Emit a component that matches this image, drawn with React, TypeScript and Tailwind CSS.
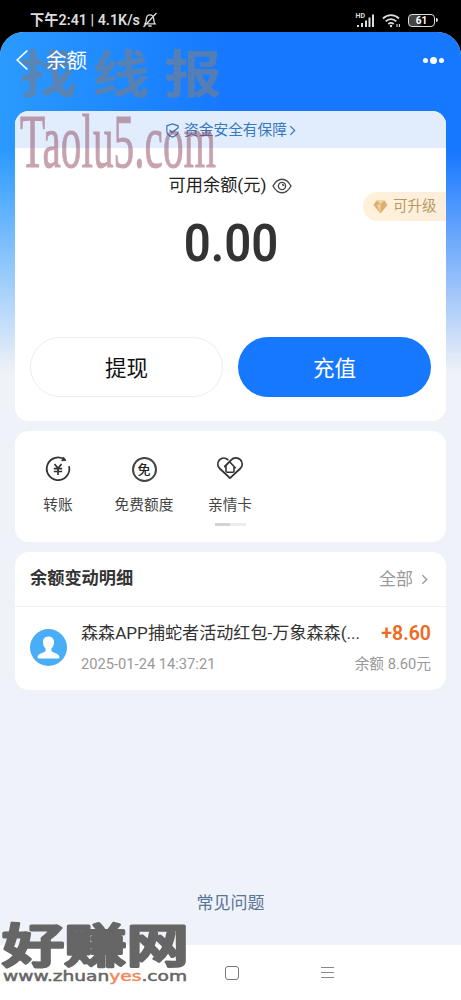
import type { ReactNode } from "react";

const ACTIONS = [
  { label: "转账", icon: <TransferIcon /> },
  { label: "免费额度", icon: <FreeQuotaIcon /> },
  { label: "亲情卡", icon: <FamilyCardIcon /> },
];

const RECORDS = [
  { title: "森森APP捕蛇者活动红包-万象森森(...", time: "2025-01-24 14:37:21", amount: "+8.60", balance: "余额 8.60元" },
];

function TransferIcon() {
  return (
    <svg viewBox="0 0 28 28" className="h-7 w-7" fill="none" stroke="#333" strokeWidth="1.8">
      <path d="M21 4.9A11.3 11.3 0 1 0 25.2 12" strokeLinecap="round" />
      <path d="M19.5 2l2.3 3.4-4.3.5z" fill="#333" strokeWidth=".6" />
      <path d="M10.5 9l3.5 4.3L17.5 9M9.8 13.6h8.4M9.8 16.5h8.4M14 13.3v6.6" strokeWidth="1.7" />
    </svg>
  );
}

function FreeQuotaIcon() {
  return (
    <span className="my-[1.5px] flex h-[25px] w-[25px] items-center justify-center rounded-full border-2 border-[#444] text-[13px] leading-none font-medium text-[#222]">
      免
    </span>
  );
}

function FamilyCardIcon() {
  return (
    <svg viewBox="0 0 28 28" className="h-7 w-7" fill="none" stroke="#333" strokeWidth="1.8" strokeLinecap="round" strokeLinejoin="round">
      <path d="M11.8 4.7C9.5 2.5 6 2.5 3.7 4.7c-2.6 2.7-2.4 6.3 0 8.800L14 23.200l10.300-9.700c2.400-2.500 2.600-6.100 0-8.800-2.600-2.600-6.700-2.300-9 .1l-6.500 6.700" />
      <path d="M10 11.5v4.7c0 .6.4 1 1 1h6c.6 0 1-.4 1-1v-4M19.3 12.7L14.5 7.7" strokeWidth="1.6" />
    </svg>
  );
}

function Card({ className, children }: { className: string; children: ReactNode }) {
  return <section className={`mx-[15px] overflow-hidden rounded-[14px] bg-white ${className}`}>{children}</section>;
}

function StatusBar() {
  return (
    <div className="flex h-8 shrink-0 items-center pt-2 pr-[23px] pl-[30px] text-[#ddd]">
      <span className="w-[110px] pt-px text-[14.3px] font-semibold whitespace-nowrap">下午2:41 | 4.1K/s</span>
      <svg viewBox="0 0 16 16" className="ml-[2px] h-4 w-4" fill="none" stroke="currentColor" strokeWidth="1.3">
        <path d="M3 11.8c1.3-1.5 1.2-3 1.3-4.8.2-2.6 1.5-4.1 3.7-4.1s3.5 1.5 3.7 4.1c.1 1.8 0 3.3 1.3 4.8zM6.3 14h3.4M14.5 1L1.5 15" />
      </svg>
      <div className="ml-auto flex items-center gap-[7px]">
        <svg viewBox="0 0 19 15" className="h-[15px] w-[19px] overflow-visible" fill="currentColor">
          <text x="-0.5" y="5" fontSize="7" fontWeight="700">HD</text>
          <path d="M1 12h2v2H1zM5 10h2v4H5zM9 7.5h2V14H9zM12.5 4.5h2V14h-2zM16 1.5h2V14h-2z" />
        </svg>
        <svg viewBox="0 0 19 15" className="h-[15px] w-[19px]" fill="none" stroke="currentColor" strokeWidth="1.8">
          <path d="M1 5.5c4.5-4.5 11.5-4.5 16 0M3.7 8.3c3-3 7.6-3 10.6 0M6.3 11c1.6-1.4 3.8-1.4 5.4 0" />
          <circle cx="9" cy="13" r="1.2" fill="currentColor" stroke="none" />
          <path d="M15 11v3M17.4 11v3" strokeWidth="1.1" />
        </svg>
        <div className="flex items-center gap-px">
          <div className="flex h-[13px] w-[27px] items-center justify-center rounded-[4px] border-[1.5px] border-[#ddd] bg-[linear-gradient(90deg,#444_35%,#000_55%)] pt-px text-[10px] leading-none font-bold text-white">
            61
          </div>
          <div className="h-[4px] w-[2px] rounded-r bg-[#ddd]" />
        </div>
      </div>
    </div>
  );
}

function Header() {
  return (
    <header className="flex h-[79px] items-start pt-4 pr-[17px] pl-4 text-white">
      <svg viewBox="0 0 12 22" className="mt-[1px] h-[22px] w-3" fill="none" stroke="currentColor" strokeWidth="1.7">
        <path d="M11.3 1.5L1.2 11l10.1 9.5" />
      </svg>
      <h1 className="mt-px ml-[18px] text-[20.5px] leading-6">余额</h1>
      <div className="mt-[9px] ml-auto flex items-center gap-[2px]">
        <span className="h-[5px] w-[5px] rounded-full bg-white" />
        <span className="h-[7px] w-[7px] rounded-full bg-white" />
        <span className="h-[5px] w-[5px] rounded-full bg-white" />
      </div>
    </header>
  );
}

function BalanceCard() {
  return (
    <Card className="relative h-[310px]">
      <div className="flex h-[37px] items-center justify-center bg-[#e1edfd] pt-px text-[14.7px] text-[#3779bd]">
        <svg viewBox="0 0 16 16" className="mr-[4px] h-[15px] w-[15px]" fill="none" stroke="currentColor" strokeWidth="1.3">
          <path d="M14 5.5V3L8 1 2 3v6c0 2.8 2.7 4.8 6 6 3.3-1.2 6-3.2 6-6" />
          <path d="M5 7.5l2.6 2.7L14 5" />
        </svg>
        资金安全有保障
        <svg viewBox="0 0 8 12" className="ml-[2px] h-[11px] w-[7px]" fill="none" stroke="currentColor" strokeWidth="1.4">
          <path d="M1.5 1L6.5 6l-5 5" />
        </svg>
      </div>
      <div className="mt-[26px] flex h-6 items-center justify-center text-[17.2px] text-[#222]">
        <span>可用余额(元)</span>
        <svg viewBox="0 0 20 16" className="ml-[6px] h-4 w-5" fill="none" stroke="#444" strokeWidth="1.4">
          <path d="M1 8c5-9 13-9 18 0-5 9-13 9-18 0z" />
          <circle cx="10" cy="8" r="3.6" />
          <path d="M10 6.5A1.5 1.5 0 0 1 11.5 8" />
        </svg>
      </div>
      <div className="mt-[20px] flex h-[52px] items-center justify-center">
        <span className="inline-block scale-x-[.91] font-[Roboto] text-[52px] leading-none font-semibold text-[#333]">0.00</span>
      </div>
      <div className="absolute top-[81px] right-0 flex h-[29px] w-[83px] items-center rounded-l-full bg-linear-to-r from-[#fff1db] to-[#fdeedc] pt-px pl-[10px] text-[14.5px] text-[#b79a63]">
        <svg viewBox="0 0 15 14" className="mr-[5px] h-[14px] w-[15px]">
          <path d="M3.5.5h8l3 4.5-7 8.5L.5 5z" fill="#dcae70" />
          <path d="M3.5.5L7.5 4l4-3.5zM7.5 4v9.5L4 5z" fill="#f2d3a3" />
        </svg>
        可升级
      </div>
      <div className="mx-[15px] mt-[67px] grid h-[60px] grid-cols-2 gap-[15px] text-[21.5px]">
        <button className="rounded-full border border-[#ececec] bg-white pt-[4px] text-[#111]">提现</button>
        <button className="rounded-full bg-[#1677ff] pt-[4px] text-white">充值</button>
      </div>
    </Card>
  );
}

function QuickActions() {
  return (
    <Card className="mt-[10px] h-[111px]">
      <div className="grid w-[258px] grid-cols-3 pt-6">
        {ACTIONS.map((item) => (
          <div key={item.label} className="flex flex-col items-center text-[14.7px] whitespace-nowrap text-[#444]">
            {item.icon}
            <span className="mt-[11px] leading-[22px]">{item.label}</span>
          </div>
        ))}
      </div>
      <div className="mx-auto mt-[7px] h-[3px] w-[31px] bg-[linear-gradient(90deg,#d2d2d2_50%,#ececec_50%)]" />
    </Card>
  );
}

function Records() {
  return (
    <Card className="mt-[10px] h-[138px]">
      <div className="flex h-[55px] items-center justify-between border-b border-[#f0f0f0] px-[15px]">
        <h2 className="text-[17.2px] font-bold text-[#333]">余额变动明细</h2>
        <div className="flex items-center pt-px text-[17px] text-[#999]">
          全部
          <svg viewBox="0 0 8 12" className="mr-[3px] ml-[8px] h-[11px] w-[7px]" fill="none" stroke="currentColor" strokeWidth="1.6">
            <path d="M1.5 1L6.5 6l-5 5" />
          </svg>
        </div>
      </div>
      {RECORDS.map((row) => (
        <div key={row.time} className="flex h-[81px] items-center px-[15px]">
          <svg viewBox="0 0 37 37" className="h-[37px] w-[37px] shrink-0">
            <circle cx="18.5" cy="18.5" r="18.5" fill="#49aef7" />
            <path d="M18.5 7.5c-4 0-6 2.8-5.5 6.8.3 2.7 1.4 4 2.6 5.4v2.2c-1 1.8-8 2.2-8 6 0 1.2.5 1.6 1.5 1.6h18.8c1 0 1.5-.4 1.5-1.6 0-3.8-7-4.2-8-6v-2.2c1.2-1.4 2.3-2.7 2.6-5.4.5-4-1.5-6.8-5.5-6.8z" fill="#fff" />
          </svg>
          <div className="ml-[14px] min-w-0 flex-1">
            <div className="flex items-center justify-between">
              <div className="text-[17.1px] leading-6 whitespace-nowrap text-[#333]">{row.title}</div>
              <div className="mt-[2px] font-[Roboto] text-[19.5px] leading-6 font-semibold text-[#ed6a21]">{row.amount}</div>
            </div>
            <div className="mt-[7px] flex justify-between text-[14.7px] leading-[22px] text-[#999]">
              <span>{row.time}</span>
              <span>{row.balance}</span>
            </div>
          </div>
        </div>
      ))}
    </Card>
  );
}

function HeaderWatermark() {
  return (
    <svg viewBox="0 0 461 100" className="pointer-events-none absolute inset-x-0 top-0 h-[100px] w-full">
      <text transform="translate(20 61) scale(1.12 1)" textLength="180" fill="#6f7f96" opacity=".7" fontFamily="'Noto Sans CJK SC', sans-serif" fontWeight="700" fontSize="51">
        找线报
      </text>
    </svg>
  );
}

function Watermarks() {
  return (
    <svg viewBox="0 0 461 1000" className="pointer-events-none absolute inset-0 h-full w-full">
      <text transform="translate(20 167) scale(.64 1)" textLength="306" lengthAdjust="spacingAndGlyphs" fill="#8b4057" stroke="#8b4057" strokeWidth="1" opacity=".48" fontFamily="'Liberation Serif', serif" fontSize="77">
        Taolu5.com
      </text>
      <text transform="translate(2 962) scale(1.28 1)" textLength="146" lengthAdjust="spacingAndGlyphs" fill="#666" stroke="#666" strokeWidth="3" strokeLinejoin="round" fontFamily="'Noto Sans CJK SC', sans-serif" fontWeight="500" fontSize="46">
        好赚网
      </text>
      <text x="3" y="981" textLength="184" lengthAdjust="spacingAndGlyphs" fill="#666" stroke="#666" strokeWidth=".5" fontFamily="'DejaVu Sans', sans-serif" fontSize="14">
        www.zhuan<tspan fill="#f0895f" stroke="#f0895f">yes</tspan>.com
      </text>
    </svg>
  );
}

export default function App() {
  return (
    <div className="relative flex h-[1000px] w-[461px] flex-col overflow-hidden bg-black font-[Roboto,'Noto_Sans_CJK_SC',sans-serif]">
      <StatusBar />
      <main className="relative flex h-[913px] flex-col overflow-hidden rounded-t-[24px] bg-[#eff2f8]">
        <div className="absolute inset-x-0 top-0 h-[340px] bg-linear-to-r from-[#2b9aff] to-[#1677ff] to-50% mask-[linear-gradient(#000_35%,transparent)]" />
        <HeaderWatermark />
        <div className="relative flex flex-1 flex-col">
          <Header />
          <BalanceCard />
          <QuickActions />
          <Records />
          <a className="mt-auto mb-[30px] self-center text-[17px] leading-6 text-[#5a7598]">常见问题</a>
        </div>
      </main>
      <nav className="flex h-[55px] items-center justify-center bg-white pr-px pl-[99px]">
        <span className="h-[14px] w-[14px] rounded-[3px] border border-[#777]" />
        <span className="ml-[82px] flex w-[13px] flex-col gap-1">
          <i className="h-px bg-[#888]" />
          <i className="h-px bg-[#888]" />
          <i className="h-px bg-[#888]" />
        </span>
      </nav>
      <Watermarks />
    </div>
  );
}
